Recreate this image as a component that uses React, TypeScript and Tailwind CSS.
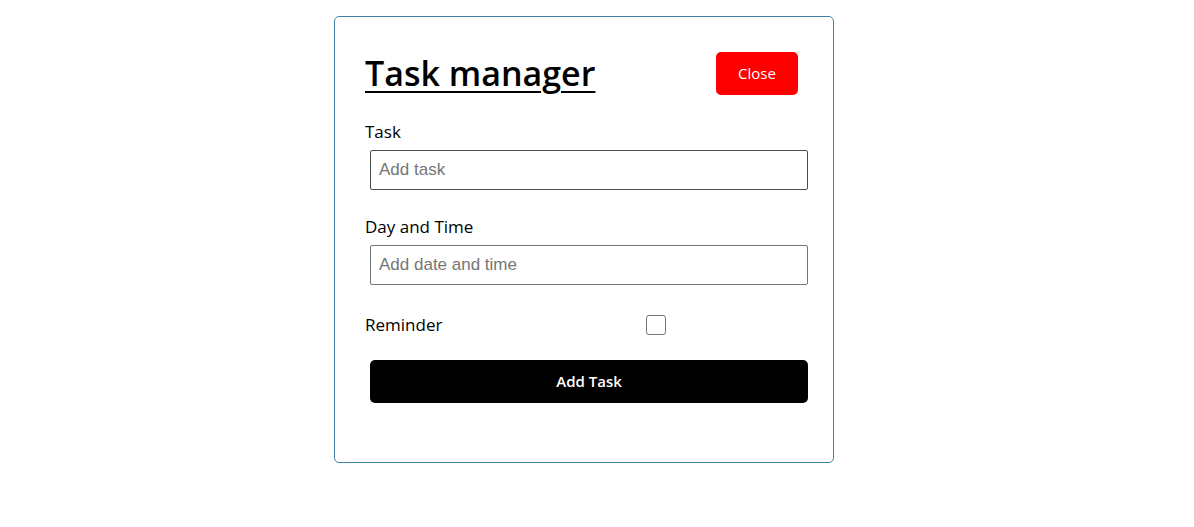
import { useState } from "react";

const font = { fontFamily: '"Open Sans", "Liberation Sans", sans-serif' };

const App = () => {
  const [reminder, setReminder] = useState(false);

  return (
    <div className="min-h-screen bg-white pt-[16px] text-black" style={font}>
      <div className="ml-[334px] w-[500px] rounded-[5px] border border-[#3d86a8] px-[30px] pt-[30px] pb-[59px]">
        <header className="flex h-[52px] items-center justify-between">
          <h1 className="text-[34px] font-semibold leading-none underline decoration-[2px] underline-offset-[5px]">
            Task manager
          </h1>
          <button className="mr-[5px] h-[43px] w-[82px] rounded-[5px] bg-[#ff0000] text-[15px] text-white">
            Close
          </button>
        </header>

        <form onSubmit={(e) => e.preventDefault()}>
          <label className="mt-[21px] block text-[17px] leading-6">Task</label>
          <input
            type="text"
            placeholder="Add task"
            className="mt-[6px] ml-[5px] block h-[40px] w-full rounded-[2px] border border-[#4d4d4d] px-[8px] text-[17px] placeholder:text-[#757575]"
            style={{ fontFamily: '"Liberation Sans", Arial, sans-serif' }}
          />

          <label className="mt-[25px] block text-[17px] leading-6">Day and Time</label>
          <input
            type="text"
            placeholder="Add date and time"
            className="mt-[6px] ml-[5px] block h-[40px] w-full rounded-[2px] border border-[#767676] px-[8px] text-[17px] placeholder:text-[#757575]"
            style={{ fontFamily: '"Liberation Sans", Arial, sans-serif' }}
          />

          <div className="mt-[28px] flex h-[24px] items-center">
            <label className="w-[281px] text-[17px] leading-6">Reminder</label>
            <input
              type="checkbox"
              checked={reminder}
              onChange={(e) => setReminder(e.target.checked)}
              className="h-[20px] w-[20px] appearance-none rounded-[3px] border border-[#767676] bg-white checked:bg-black"
            />
          </div>

          <button
            type="submit"
            className="mt-[23px] ml-[5px] block h-[43px] w-full rounded-[5px] bg-black text-[15px] font-semibold text-white"
          >
            Add Task
          </button>
        </form>
      </div>
    </div>
  );
};

export default App;
